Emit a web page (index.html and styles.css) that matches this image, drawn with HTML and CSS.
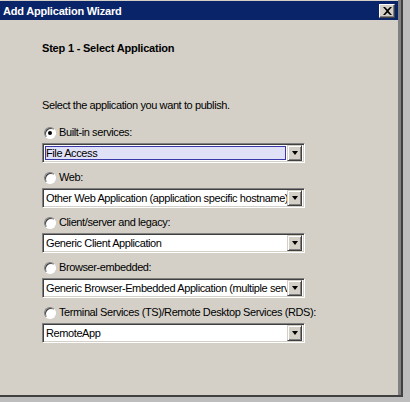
FILE: index.html
```html
<!DOCTYPE html>
<html>
<head>
<meta charset="utf-8">
<link rel="stylesheet" href="styles.css">
</head>
<body>
<div class="frame">
  <div class="dialog">
    <div class="titlebar">
      <span class="title">Add Application Wizard</span>
      <span class="close"><svg width="9" height="8" viewBox="0 0 9 8"><path d="M0 0h2l2.5 2.5L7 0h2L5.5 4 9 8H7L4.5 5.5 2 8H0l3.5-4z" fill="#000"/></svg></span>
    </div>
    <div class="body">
      <div class="step">Step 1 - Select Application</div>
      <div class="intro">Select the application you want to publish.</div>

      <div class="group">
        <label class="radio-row"><span class="radio checked"></span>Built-in services:</label>
        <div class="combo focus"><span class="field"><span class="val">File Access</span></span><span class="btn"><span class="arrow"></span></span></div>
      </div>
      <div class="group">
        <label class="radio-row"><span class="radio"></span>Web:</label>
        <div class="combo"><span class="field"><span class="val">Other Web Application (application specific hostname)</span></span><span class="btn"><span class="arrow"></span></span></div>
      </div>
      <div class="group">
        <label class="radio-row"><span class="radio"></span>Client/server and legacy:</label>
        <div class="combo"><span class="field"><span class="val">Generic Client Application</span></span><span class="btn"><span class="arrow"></span></span></div>
      </div>
      <div class="group">
        <label class="radio-row"><span class="radio"></span>Browser-embedded:</label>
        <div class="combo"><span class="field"><span class="val">Generic Browser-Embedded Application (multiple servers)</span></span><span class="btn"><span class="arrow"></span></span></div>
      </div>
      <div class="group">
        <label class="radio-row"><span class="radio"></span>Terminal Services (TS)/Remote Desktop Services (RDS):</label>
        <div class="combo"><span class="field"><span class="val">RemoteApp</span></span><span class="btn"><span class="arrow"></span></span></div>
      </div>
    </div>
  </div>
</div>
</body>
</html>
```
FILE: styles.css
```css
html, body {
  margin: 0;
  padding: 0;
}
body {
  width: 410px;
  height: 402px;
  background: #bdbdbd;
  font-family: "Liberation Sans", Arial, sans-serif;
  font-size: 11px;
  letter-spacing: -0.4px;
  color: #000;
  overflow: hidden;
}
.frame {
  width: 403px;
  height: 397px;
  background: #d4d0c8;
  border-right: 2px solid #404040;
  border-bottom: 2px solid #404040;
  box-sizing: border-box;
}
.dialog {
  height: 100%;
  display: flex;
  flex-direction: column;
  border-right: 3px solid #808080;
  box-sizing: border-box;
}
.titlebar {
  height: 19px;
  background: #0a246a;
  display: flex;
  align-items: center;
  justify-content: space-between;
  padding: 0 3px 0 3px;
  margin-top: 1px;
}
.title {
  color: #fff;
  font-weight: bold;
  font-size: 11px;
  letter-spacing: -0.2px;
}
.close {
  width: 14px;
  height: 12px;
  background: #d4d0c8;
  border-top: 1px solid #fff;
  border-left: 1px solid #fff;
  border-right: 1px solid #404040;
  border-bottom: 1px solid #404040;
  display: flex;
  align-items: center;
  justify-content: center;
  box-shadow: inset -1px -1px 0 #808080;
}
.body {
  padding: 22px 0 0 42px;
}
.step {
  font-weight: bold;
  font-size: 11px;
  letter-spacing: -0.2px;
  height: 13px;
  line-height: 13px;
}
.intro {
  margin-top: 44px;
  height: 13px;
  line-height: 13px;
}
.group {
  margin-top: 8px;
}
.intro + .group {
  margin-top: 14px;
}
.radio-row {
  display: flex;
  align-items: center;
  height: 13px;
  line-height: 13px;
  padding-left: 2px;
  margin-bottom: 4px;
}
.radio {
  width: 12px;
  height: 12px;
  box-sizing: border-box;
  border-radius: 50%;
  background: #fff;
  border: 1px solid;
  border-color: #808080 #fff #fff #808080;
  box-shadow: inset 1px 1px 0 #404040;
  margin-right: 3px;
  display: flex;
  align-items: center;
  justify-content: center;
}
.radio.checked::after {
  content: "";
  width: 4px;
  height: 4px;
  border-radius: 50%;
  background: #000;
}
.combo {
  width: 263px;
  height: 20px;
  box-sizing: border-box;
  display: flex;
  background: #fff;
  border-top: 1px solid #808080;
  border-left: 1px solid #808080;
  border-right: 1px solid #fff;
  border-bottom: 1px solid #fff;
  box-shadow: inset 1px 1px 0 #404040, inset -1px -1px 0 #d4d0c8;
  padding: 2px;
}
.field {
  flex: 1;
  min-width: 0;
  overflow: hidden;
  white-space: nowrap;
  display: flex;
  align-items: center;
  padding-left: 1px;
}
.combo.focus .field {
  background: #e0e0f6;
  border: 1px solid #3838a8;
  padding-left: 0;
  margin-right: 1px;
}
.val {
  line-height: 13px;
}
.btn {
  width: 15px;
  flex: none;
  background: #d4d0c8;
  border-top: 1px solid #d4d0c8;
  border-left: 1px solid #d4d0c8;
  border-right: 1px solid #404040;
  border-bottom: 1px solid #404040;
  box-shadow: inset 1px 1px 0 #fff, inset -1px -1px 0 #808080;
  box-sizing: border-box;
  display: flex;
  align-items: center;
  justify-content: center;
  margin-top: -1px;
  margin-bottom: -1px;
}
.arrow {
  width: 0;
  height: 0;
  border-left: 3.5px solid transparent;
  border-right: 3.5px solid transparent;
  border-top: 4px solid #000;
}
```
